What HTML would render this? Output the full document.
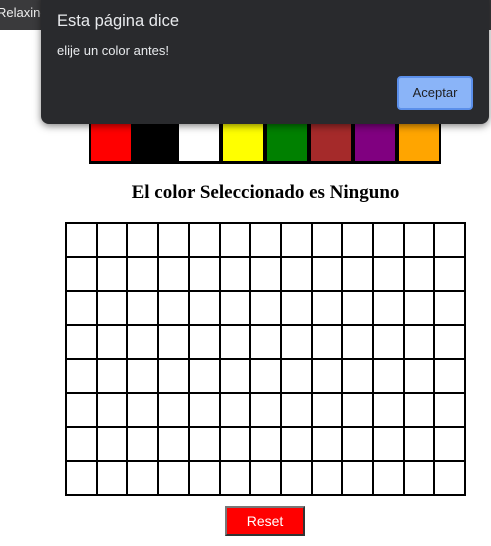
<!DOCTYPE html>
<html><head><meta charset="utf-8"><style>
body{margin:0;width:491px;height:546px;position:relative;background:#fff;overflow:hidden;font-family:"Liberation Sans",sans-serif}
.a{position:absolute}
.h{position:absolute;left:65px;width:400px;height:2px;background:#000}
.v{position:absolute;top:222px;height:274px;width:2px;background:#000}
</style></head><body>
<div class="a" style="left:0;top:0;width:491px;height:30px;background:#3a3a3c"></div>
<div class="a" style="left:-3px;top:5px;color:#eee;font-size:13px">Relaxing</div>
<div class="a" style="left:89px;top:118px;width:352px;height:46px;background:#000"></div>
<div class="a" style="left:91px;top:121px;width:40px;height:40px;background:red"></div>
<div class="a" style="left:179px;top:121px;width:40px;height:40px;background:#fff"></div>
<div class="a" style="left:223px;top:121px;width:40px;height:40px;background:#ff0"></div>
<div class="a" style="left:267px;top:121px;width:40px;height:40px;background:green"></div>
<div class="a" style="left:311px;top:121px;width:40px;height:40px;background:brown"></div>
<div class="a" style="left:355px;top:121px;width:40px;height:40px;background:purple"></div>
<div class="a" style="left:399px;top:121px;width:40px;height:40px;background:orange"></div>
<div class="a" style="left:0;width:531px;top:182px;text-align:center;font:bold 19px 'Liberation Serif',serif">El color Seleccionado es Ninguno</div>
<div id="g"></div>
<div class="a" style="left:225px;top:506px;width:76px;height:26px;background:red;border:2px solid;border-color:#777 #333 #333 #777;color:#fff;font-size:14px;text-align:center;line-height:27px">Reset</div>
<div class="a" style="left:41px;top:-8px;width:448px;height:132px;background:#292a2d;border-radius:8px;box-shadow:0 2px 8px rgba(0,0,0,.5)"></div>
<div class="a" style="left:57px;top:12px;color:#e8eaed;font-size:16.5px">Esta página dice</div>
<div class="a" style="left:57px;top:43px;color:#e8eaed;font-size:13px">elije un color antes!</div>
<div class="a" style="left:397px;top:76px;width:72px;height:30px;background:#8ab4f8;border:2px solid #5b8fea;border-radius:4px;color:#202124;font-size:13px;text-align:center;line-height:30px">Aceptar</div>
<script>
var g=document.getElementById('g'),s='';
for(var i=0;i<=8;i++)s+='<div class="h" style="top:'+(222+i*34)+'px"></div>';
for(var j=0;j<=13;j++)s+='<div class="v" style="left:'+Math.round(65+j*30.7)+'px"></div>';
g.innerHTML=s;
</script>
</body></html>
